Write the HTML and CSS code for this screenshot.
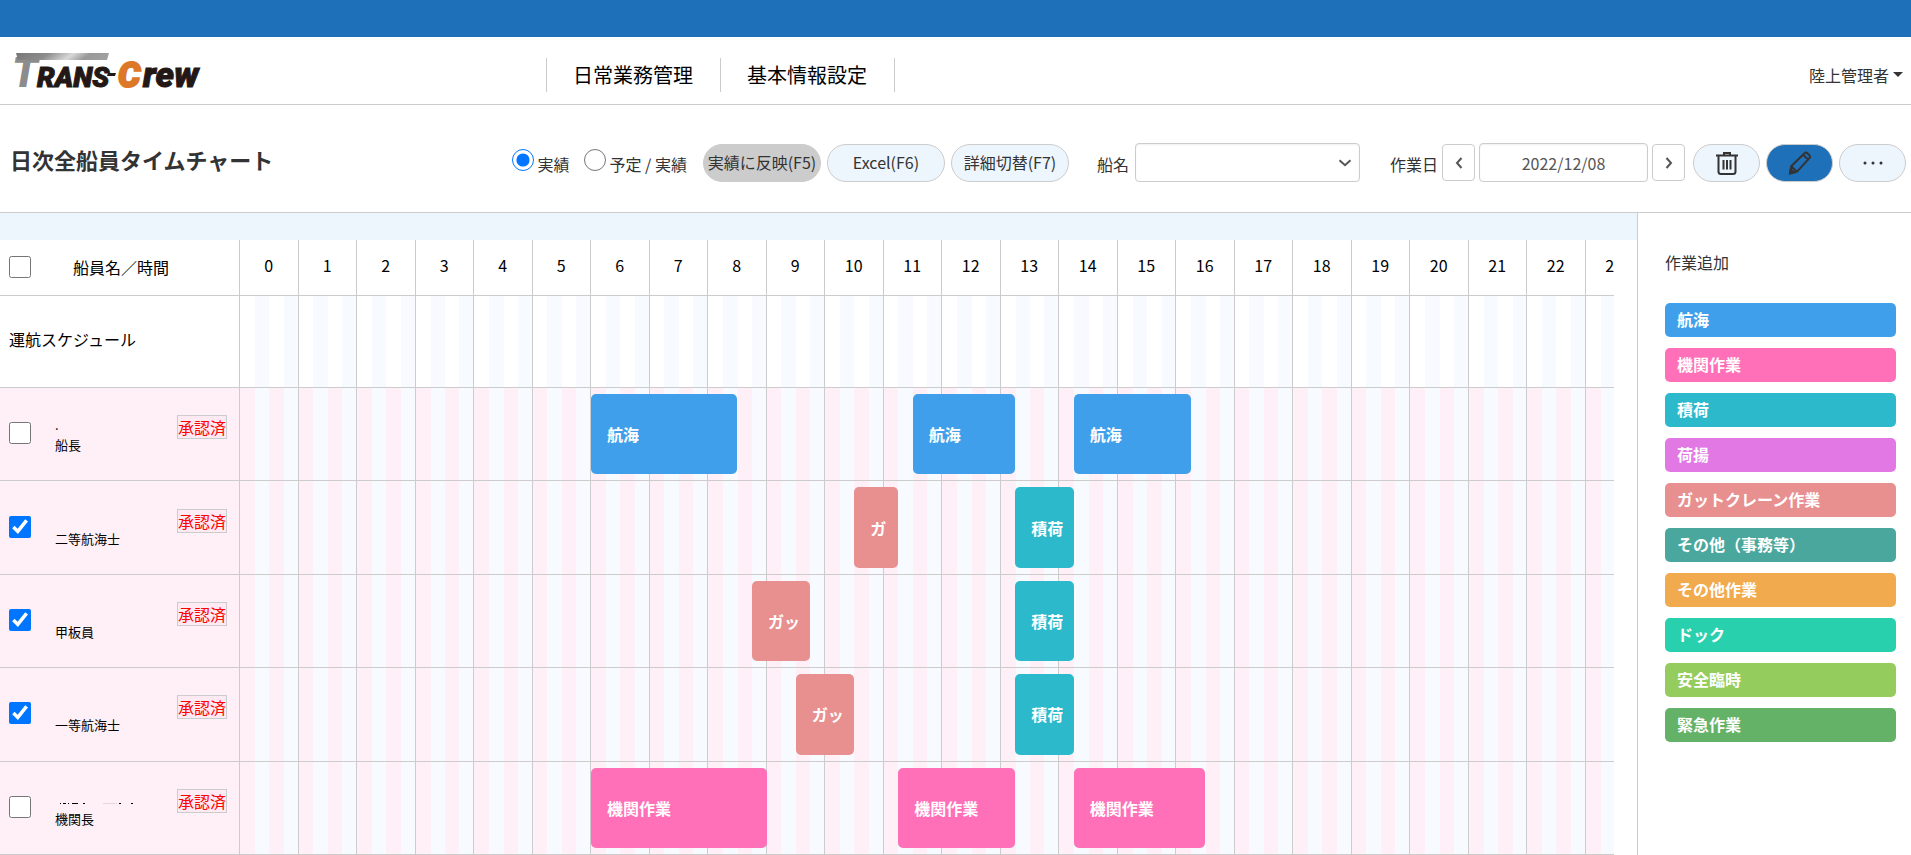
FILE: index.html
```html
<!DOCTYPE html>
<html lang="ja">
<head>
<meta charset="utf-8">
<title>日次全船員タイムチャート</title>
<link rel="stylesheet" href="styles.css">
</head>
<body>
<div class="topbar"></div>
<header class="header">
  <a class="logo" href="#" aria-label="TRANS-Crew">
    <svg width="192" height="38" viewBox="0 0 192 38">
      <defs>
        <linearGradient id="steel" x1="0" x2="1" y1="0" y2="0.1">
          <stop offset="0" stop-color="#777"/>
          <stop offset="0.35" stop-color="#8c8c8c"/>
          <stop offset="0.62" stop-color="#d8d8d8"/>
          <stop offset="0.8" stop-color="#999"/>
          <stop offset="1" stop-color="#a0a0a0"/>
        </linearGradient>
      </defs>
      <text class="logo-t" x="-4" y="35">T</text>
      <path d="M0 1H93L91 8H2Z" fill="url(#steel)"/>
      <text class="logo-word" x="21" y="35">RANS</text>
      <path d="M92 21h8l-1 3h-8z" fill="#231815"/>
      <text class="logo-word logo-c" x="102" y="35">C</text>
      <text class="logo-word logo-rew" x="127" y="35">rew</text>
    </svg>
  </a>
  <nav class="nav">
    <a href="#">日常業務管理</a>
    <a href="#">基本情報設定</a>
  </nav>
  <button class="user" type="button">陸上管理者<span class="caret"></span></button>
</header>

<div class="toolbar">
  <h1 class="title">日次全船員タイムチャート</h1>
  <div class="controls">
    <div class="radios">
      <label class="radio"><input type="radio" name="mode" checked><span>実績</span></label>
      <label class="radio"><input type="radio" name="mode"><span>予定 / 実績</span></label>
    </div>
    <div class="pills">
      <button class="pill pill-off" type="button">実績に反映(F5)</button>
      <button class="pill" type="button">Excel(F6)</button>
      <button class="pill" type="button">詳細切替(F7)</button>
    </div>
    <div class="field ship">
      <label for="ship">船名</label>
      <span class="select-wrap">
        <select id="ship"><option></option></select>
        <svg class="chevron" width="14" height="8" viewBox="0 0 14 8"><path d="M1.5 1.2 7 6.2l5.500-5" /></svg>
      </span>
    </div>
    <div class="field">
      <label for="date">作業日</label>
      <button class="step" type="button" aria-label="前日"><svg width="8" height="12" viewBox="0 0 8 12"><path d="M6.500 1 2 6l4.500 5"/></svg></button>
      <input id="date" class="date" type="text" value="2022/12/08">
      <button class="step" type="button" aria-label="翌日"><svg width="8" height="12" viewBox="0 0 8 12"><path d="M1.500 1 6 6l-4.500 5"/></svg></button>
    </div>
    <div class="pills">
      <button class="pill icon" type="button" aria-label="削除">
        <svg width="24" height="24" viewBox="0 0 24 24"><path d="M1 4.500h22M3.500 5v15.500a2.500 2.500 0 0 0 2.500 2.500h12a2.500 2.500 0 0 0 2.500-2.500V5M9 4V2h6v2M8.500 9v9.500M12 9v9.500M15.500 9v9.500"/></svg>
      </button>
      <button class="pill icon pill-on" type="button" aria-label="編集">
        <svg width="24" height="24" viewBox="0 0 24 24"><path d="M2 22.500 3.200 15.200 16.500 2.200a2 2 0 0 1 2.900 0l2 2a2 2 0 0 1 0 2.900L9 20.600ZM3.500 15.500l5 5M15.500 4l4.500 4.500"/><path d="M2 22.500l.8-4 3.200 3z" fill="#333"/></svg>
      </button>
      <button class="pill icon" type="button" aria-label="その他">
        <svg class="dots" width="20" height="4" viewBox="0 0 20 4"><circle cx="2" cy="2" r="1.500"/><circle cx="10" cy="2" r="1.500"/><circle cx="18" cy="2" r="1.500"/></svg>
      </button>
    </div>
  </div>
</div>

<main class="main">
  <section class="board">
    <div class="band"></div>
    <div class="chart" id="chart">
      <div class="row row-head">
        <div class="side side-head"><input type="checkbox" aria-label="全選択"><span>船員名／時間</span></div>
        <div class="hours" id="hours"></div>
      </div>
      <div class="row row-plan">
        <div class="side">運航スケジュール</div>
        <div class="track"></div>
      </div>
    </div>
  </section>
  <aside class="panel">
    <h2>作業追加</h2>
    <button type="button" class="task sail">航海</button>
    <button type="button" class="task engine">機関作業</button>
    <button type="button" class="task load">積荷</button>
    <button type="button" class="task unload">荷揚</button>
    <button type="button" class="task crane">ガットクレーン作業</button>
    <button type="button" class="task office">その他（事務等）</button>
    <button type="button" class="task other">その他作業</button>
    <button type="button" class="task dock">ドック</button>
    <button type="button" class="task safety">安全臨時</button>
    <button type="button" class="task urgent">緊急作業</button>
  </aside>
</main>
<script src="chart.js"></script>
</body>
</html>
```

FILE: styles.css
```css
* { box-sizing: border-box; }

body {
  margin: 0;
  height: 100vh;
  display: flex;
  flex-direction: column;
  overflow: hidden;
  background: #fff;
  color: #333;
  font-family: "Noto Sans CJK JP", sans-serif;
  font-size: 16px;
  line-height: 24px;
}

button, input, select { font: inherit; color: inherit; margin: 0; }
button { cursor: pointer; }
svg { display: block; fill: none; stroke: none; }

.topbar { flex: none; height: 37px; background: #1e70b9; }

.header {
  flex: none;
  display: grid;
  grid-template-columns: 546px 1fr auto;
  align-items: center;
  height: 68px;
  border-bottom: 1px solid #ccc;
}
.logo { padding-left: 16px; }
.logo svg { overflow: visible; }
.logo-t, .logo-word { font-family: Roboto, sans-serif; font-style: italic; font-weight: 900; }
.logo-t { font-size: 42px; fill: #8c8c8c; }
.logo-word { font-size: 28px; fill: #231815; stroke: #231815; stroke-width: 1px; }
.logo-c { font-size: 35px; fill: #dc7828; stroke: #dc7828; stroke-width: 2px; }
.logo-rew { font-size: 35px; }

.nav { display: flex; justify-self: start; margin-top: 8px; border-left: 1px solid #ccc; }
.nav a {
  padding: 0 27px 0 26px;
  border-right: 1px solid #ccc;
  color: #000;
  font-size: 20px;
  line-height: 34px;
  text-decoration: none;
}

.user {
  display: flex;
  align-items: center;
  gap: 4px;
  margin-top: 8px;
  padding: 0 8px 0 0;
  border: 0;
  background: none;
}
.caret { border: 5px solid transparent; border-top-color: #333; border-bottom: 0; }

.toolbar {
  flex: none;
  display: flex;
  justify-content: space-between;
  align-items: center;
  height: 108px;
  padding: 8px 5px 0 10px;
  border-bottom: 1px solid #ccc;
}
.title { margin: 0 0 8px; font-size: 22px; font-weight: 700; line-height: 32px; }
.controls, .radios, .radio, .pills, .field { display: flex; align-items: center; }
.radios { gap: 14px; margin-right: 16px; }
.radio { gap: 4px; }
.radio input { width: 22px; height: 22px; margin-bottom: 6px; }
.radio span, .field label { padding-top: 2px; white-space: nowrap; }
.pills { gap: 6px; }

.pill {
  display: flex;
  align-items: center;
  justify-content: center;
  width: 118px;
  height: 38px;
  padding: 0 0 2px;
  border: 1px solid #ccc;
  border-radius: 19px;
  background: #edf5fd;
  white-space: nowrap;
}
.pill-off { background: #ccc; }
.pill.icon { width: 67px; padding: 0; }
.pill.pill-on { background: #1e70b9; }
.icon svg { stroke: #333; stroke-width: 2; }
.icon .dots { fill: #333; stroke: none; }

.field { gap: 4px; margin-right: 8px; }
.field.ship { gap: 6px; margin: 0 30px 0 28px; }
.select-wrap { position: relative; }
.select-wrap select, .date {
  height: 39px;
  border: 1px solid #ccc;
  border-radius: 4px;
  background: #fff;
  box-shadow: inset 0 1px 2px #0001;
}
.select-wrap select { display: block; width: 225px; appearance: none; }
.chevron { position: absolute; top: 16px; right: 8px; pointer-events: none; }
.chevron, .step svg { stroke: #555; stroke-width: 2; }
.date { width: 169px; padding: 0; text-align: center; color: #555; }
.step {
  display: flex;
  align-items: center;
  justify-content: center;
  width: 33px;
  height: 37px;
  padding: 0;
  border: 1px solid #ccc;
  border-radius: 4px;
  background: #fff;
}

.main { flex: 1; display: flex; min-height: 0; }
.board { flex: 1; min-width: 0; display: flex; flex-direction: column; }
.band { flex: none; height: 27px; background: #edf5fd; }
.chart {
  flex: 1;
  display: grid;
  grid-template-rows: 56px 92px;
  grid-auto-rows: 1fr;
  margin-right: 23px;
  overflow: hidden;
  color: #000;
}
.row {
  display: grid;
  grid-template-columns: 240px 1404px;
  border-bottom: 1px solid #ccc;
}
.side {
  display: flex;
  align-items: center;
  padding: 0 0 2px 9px;
  border-right: 1px solid #ccc;
}
.row-plan .side { padding-bottom: 6px; }
.side input { flex: none; width: 22px; height: 22px; }
.side-head { gap: 42px; }

.hours, .track { display: grid; min-height: 0; }
.hours { grid-template-columns: repeat(24, minmax(0, 1fr)); }
.hour { border-right: 1px solid #ccc; line-height: 50px; text-align: center; }
.track { grid-template-columns: repeat(96, minmax(0, 1fr)); }
.cell {
  grid-row: 1;
  border-right: 1px solid #ccc;
  background: linear-gradient(90deg, transparent 25%, #f7fbff 25% 50%, transparent 50% 75%, #f7fbff 75%) border-box;
}

.row-crew { background: #fff0f7; }
.row-crew .side { gap: 24px; padding-right: 12px; }
.crew { flex: 1; display: flex; flex-direction: column; padding-top: 4px; font-size: 13px; line-height: 20px; }
.crew-name { height: 20px; line-height: 20px; }
.crew-name svg { margin-top: 14px; stroke: #000; }
.badge {
  margin-bottom: 12px;
  border: 1px solid #ccc;
  background: #fdeaf3;
  color: #f00;
  line-height: 22px;
}

.block {
  grid-row: 1;
  z-index: 1;
  display: flex;
  align-items: center;
  margin: 6px 0;
  padding: 0 10px 0 16px;
  border-radius: 5px;
  color: #fff;
  font-weight: 700;
}
.block span { height: 24px; overflow: hidden; word-break: break-all; }

.panel {
  flex: none;
  display: flex;
  flex-direction: column;
  gap: 11px;
  width: 274px;
  padding: 37px 15px 0 27px;
  border-left: 1px solid #ccc;
}
.panel h2 { margin: 0 0 18px; font-size: 16px; font-weight: 400; line-height: 24px; }
.task {
  height: 34px;
  padding: 0 12px 2px;
  border: 0;
  border-radius: 5px;
  color: #fff;
  font-weight: 700;
  text-align: left;
}

.sail { background: #409fea; }
.engine { background: #ff70b8; }
.load { background: #2cb9cc; }
.unload { background: #e278e4; }
.crane { background: #e88f8f; }
.office { background: #49a79d; }
.other { background: #f2aa4e; }
.dock { background: #29d0ae; }
.safety { background: #95cc5e; }
.urgent { background: #64b268; }
```

FILE: chart.js
```js
const labels = { sail: "航海", engine: "機関作業", load: "積荷", crane: "ガットクレーン作業" };

// Each task is [type, start hour, end hour].
const crew = [
  { rank: "船長", name: ".", checked: false, tasks: [["sail", 6, 8.5], ["sail", 11.5, 13.25], ["sail", 14.25, 16.25]] },
  { rank: "二等航海士", name: "", checked: true, tasks: [["crane", 10.5, 11.25], ["load", 13.25, 14.25]] },
  { rank: "甲板員", name: "", checked: true, tasks: [["crane", 8.75, 9.75], ["load", 13.25, 14.25]] },
  { rank: "一等航海士", name: "", checked: true, tasks: [["crane", 9.5, 10.5], ["load", 13.25, 14.25]] },
  { rank: "機関長", name: '<svg width="80" height="1" viewBox="0 0 80 1"><path d="M5 .5h1M8 .5h3M13 .5h1M17 .5h6M28 .5h2M64 .5h2M76 .5h2"/><path d="M48 .5h14" opacity=".1"/></svg>', checked: false, tasks: [["engine", 6, 9], ["engine", 11.25, 13.25], ["engine", 14.25, 16.5]] }
];

document.getElementById("hours").innerHTML =
  Array.from({ length: 24 }, (_, h) => `<div class="hour">${h}</div>`).join("");

const chart = document.getElementById("chart");
for (const c of crew) {
  // Short bars only have room for the first characters of their label.
  const blocks = c.tasks.map(([type, from, to]) => {
    const room = Math.max(1, Math.floor(((to - from) * 58.5 - 26) / 16));
    return `<div class="block ${type}" style="grid-column:${from * 4 + 1}/${to * 4 + 1}" title="${labels[type]}"><span>${labels[type].slice(0, room)}</span></div>`;
  }).join("");
  chart.insertAdjacentHTML("beforeend", `
    <div class="row row-crew">
      <div class="side">
        <input type="checkbox" aria-label="${c.rank}" ${c.checked ? "checked" : ""}>
        <div class="crew"><div class="crew-name">${c.name}</div><div>${c.rank}</div></div>
        <span class="badge">承認済</span>
      </div>
      <div class="track">${blocks}</div>
    </div>`);
}

const cells = Array.from({ length: 24 }, (_, h) =>
  `<div class="cell" style="grid-column:${h * 4 + 1}/span 4"></div>`).join("");
document.querySelectorAll(".track").forEach(t => t.insertAdjacentHTML("afterbegin", cells));
```
